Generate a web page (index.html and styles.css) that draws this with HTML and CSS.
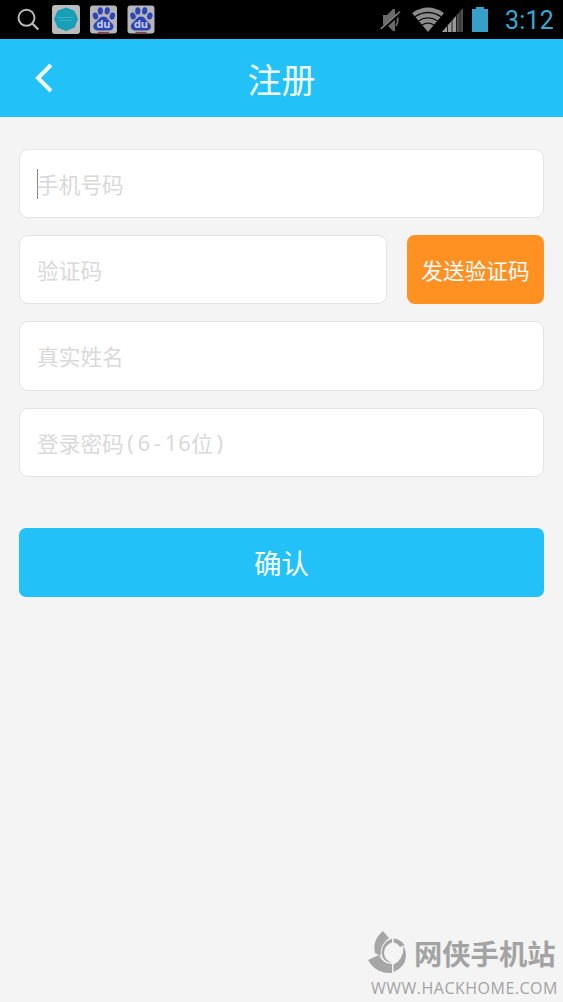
FILE: index.html
```html
<!DOCTYPE html>
<html lang="zh-CN">
<head>
<meta charset="utf-8">
<title>注册</title>
<link rel="stylesheet" href="styles.css">
</head>
<body>
<div class="screen">
  <div class="status">
    <svg class="status-icons" width="160" height="38" viewBox="0 0 160 38">
      <defs>
        <g id="paw">
          <rect width="27" height="28" rx="3" fill="#b5b6b9"/>
          <g fill="#2f45b5">
            <ellipse cx="5.500" cy="10.500" rx="2.700" ry="3.500" transform="rotate(-15 5.5 10.5)"/>
            <ellipse cx="10.300" cy="5.400" rx="2.600" ry="3.600"/>
            <ellipse cx="17.200" cy="5.400" rx="2.600" ry="3.600" transform="rotate(10 17.2 5.4)"/>
            <ellipse cx="22.300" cy="10.500" rx="2.700" ry="3.500" transform="rotate(12 22.3 10.5)"/>
            <path d="M13.500 11c3.800 0 4.500 3.500 7 5.500s3.800 4 2.500 6.500-5 2-9.500 2-8.200.5-9.500-2-.5-4.500 2-6.500 3.700-5.500 7.500-5.500z"/>
          </g>
          <path d="M8 27h11" stroke="#9a3b4b" stroke-width="1.200"/>
          <text x="13.500" y="22.500" text-anchor="middle" class="du">du</text>
        </g>
      </defs>
      <g fill="none" stroke="#b9b9b9" stroke-width="2"><circle cx="26.500" cy="17.800" r="8"/><path d="M32.300 23.500l6 6" stroke-width="2.400"/></g>
      <rect x="52" y="5" width="28" height="29" rx="3" fill="#b9bbbd"/>
      <path d="M66 7.500l8.500 3.300 3.500 8.200-3.500 8.500-8.500 3.500-8.500-3.500-3.500-8.500 3.500-8.200z" fill="#169fb5"/>
      <path d="M58 17.500h15M60 20.500h12" stroke="#4fb3c4" stroke-width="1.200" stroke-dasharray="2 .7"/>
      <use href="#paw" x="90" y="5.500"/>
      <use href="#paw" x="127.500" y="5.500"/>
    </svg>
    <div class="status-right">
      <svg width="112" height="38" viewBox="0 0 112 38">
        <path d="M3 15h4l6-6h2v22h-2l-6-6H3z" fill="#6a6a6a"/>
        <path d="M16 14q3.500 6 0 12" fill="none" stroke="#6a6a6a" stroke-width="1.800"/>
        <path d="M1.500 30.500L21 13" stroke="#000" stroke-width="2"/><path d="M.8 28.800L20 11.500" stroke="#7c7c7c" stroke-width="1.600"/>
        <path d="M32 13q16-11 32 0L48 32z" fill="#8b8b8b"/>
        <g fill="none" stroke="#111" stroke-width="1.300"><path d="M34.500 17q13.500-9 27 0M38 21.200q10-6.500 20 0M41.500 25.200q6.500-4 13 0"/></g>
        <path d="M83 8v24H62z" fill="#505050"/><path d="M76 16v16H62z" fill="#999"/>
        <path d="M67.500 24v8M72 20v12M76.500 14v18M80 10v22" stroke="#222" stroke-width="1"/>
        <path d="M92 9h4V7h8v2h4v23H92z" fill="#36a0c9"/>
      </svg>
      <span class="clock">3:12</span>
    </div>
  </div>
  <header class="bar">
    <svg class="back" width="20" height="30" viewBox="0 0 20 30"><path d="M18 2L5 15l13 13" fill="none" stroke="#f2fdff" stroke-width="4"/></svg>
    <h1>注册</h1>
  </header>
  <main class="form">
    <div class="field focused">手机号码</div>
    <div class="row">
      <div class="field grow">验证码</div>
      <button class="send">发送验证码</button>
    </div>
    <div class="field">真实姓名</div>
    <div class="field">登录密码<span class="cell">(</span><span class="cell">6</span><span class="cell">-</span><span class="cell">1</span><span class="cell">6</span>位<span class="cell">)</span></div>
    <button class="confirm">确认</button>
  </main>
  <footer class="mark">
    <div class="mark-top">
      <svg width="42" height="46" viewBox="0 0 42 46" fill="#a6a6a6">
        <path d="M15 0L21 7Q12 13 12.500 25L7 22Q4 9 15 0z"/>
        <path d="M0 29l11-5q4 9 13 9v9Q8 43 0 29z"/>
        <path d="M25.500 41v-7.500Q36 29 35.500 14q8 19-10 27z"/>
        <path d="M25.500 7.500q7 .5 11 6.500l-4.500 2q-2.500-4-6.500-4.500z"/>
        <path d="M24 7.500v4q-8 3-8 11 1 7 8 9.500-10-1-10.500-10.500Q14.500 11 24 7.500z"/>
      </svg>
      <span class="mark-name">网侠手机站</span>
    </div>
    <div class="mark-url">WWW.HACKHOME.COM</div>
  </footer>
</div>
</body>
</html>
```

FILE: styles.css
```css
* { box-sizing: border-box; }
body { margin: 0; font-family: "Noto Sans CJK SC", sans-serif; }
.screen { width: 563px; height: 1002px; background: #f4f4f4; display: flex; flex-direction: column; overflow: hidden; }
.status { height: 39px; background: #000; display: flex; justify-content: space-between; flex: none; }
.du { font: bold 11px "Open Sans", sans-serif; fill: #c8d0e8; }
.status-right { display: flex; width: 183px; }
.clock { font: 25px/41px Roboto, sans-serif; color: #38a9d4; margin-left: 13px; letter-spacing: .2px; }
.bar { height: 78px; flex: none; background: #22c1f7; display: grid; grid-template-columns: 80px 1fr 80px; align-items: center; }
.back { margin-left: 33px; }
.bar h1 { margin: 0; padding-top: 2px; text-align: center; font-size: 34px; line-height: 50px; font-weight: 400; color: #f2fdff; }
.form { padding: 32px 19px 0; display: flex; flex-direction: column; gap: 17px; flex: 1; }
.field { height: 69.200px; border: 1px solid #e4e4e4; border-radius: 9px; background: #fff; padding: 0 17px; display: flex; align-items: center; font-size: 21.700px; color: #d9d9d9; }
.focused::before { content: ""; width: 1px; height: 30px; margin-right: -1px; background: #888; }
.cell { width: 13.500px; text-align: center; font-family: "Noto Sans", sans-serif; }
.row { display: flex; gap: 20px; }
.grow { flex: 1; }
button { border: 0; padding: 0; font-family: inherit; color: #f6fdff; border-radius: 8px; }
.send { width: 137px; background: #ff9123; font-size: 21.700px; }
.confirm { height: 69px; margin-top: 34px; background: #22c1f7; font-size: 27.500px; border-radius: 7px; }
.mark { align-self: flex-end; width: 195px; height: 72px; color: #a3a3a3; }
.mark-top { display: flex; height: 47px; align-items: center; gap: 4px; }
.mark-name { font-size: 28.300px; line-height: 44px; padding-bottom: 2px; font-weight: 700; white-space: nowrap; }
.mark-url { font: 16px/22px "Open Sans", sans-serif; letter-spacing: .5px; padding-left: 3px; white-space: nowrap; }
```
